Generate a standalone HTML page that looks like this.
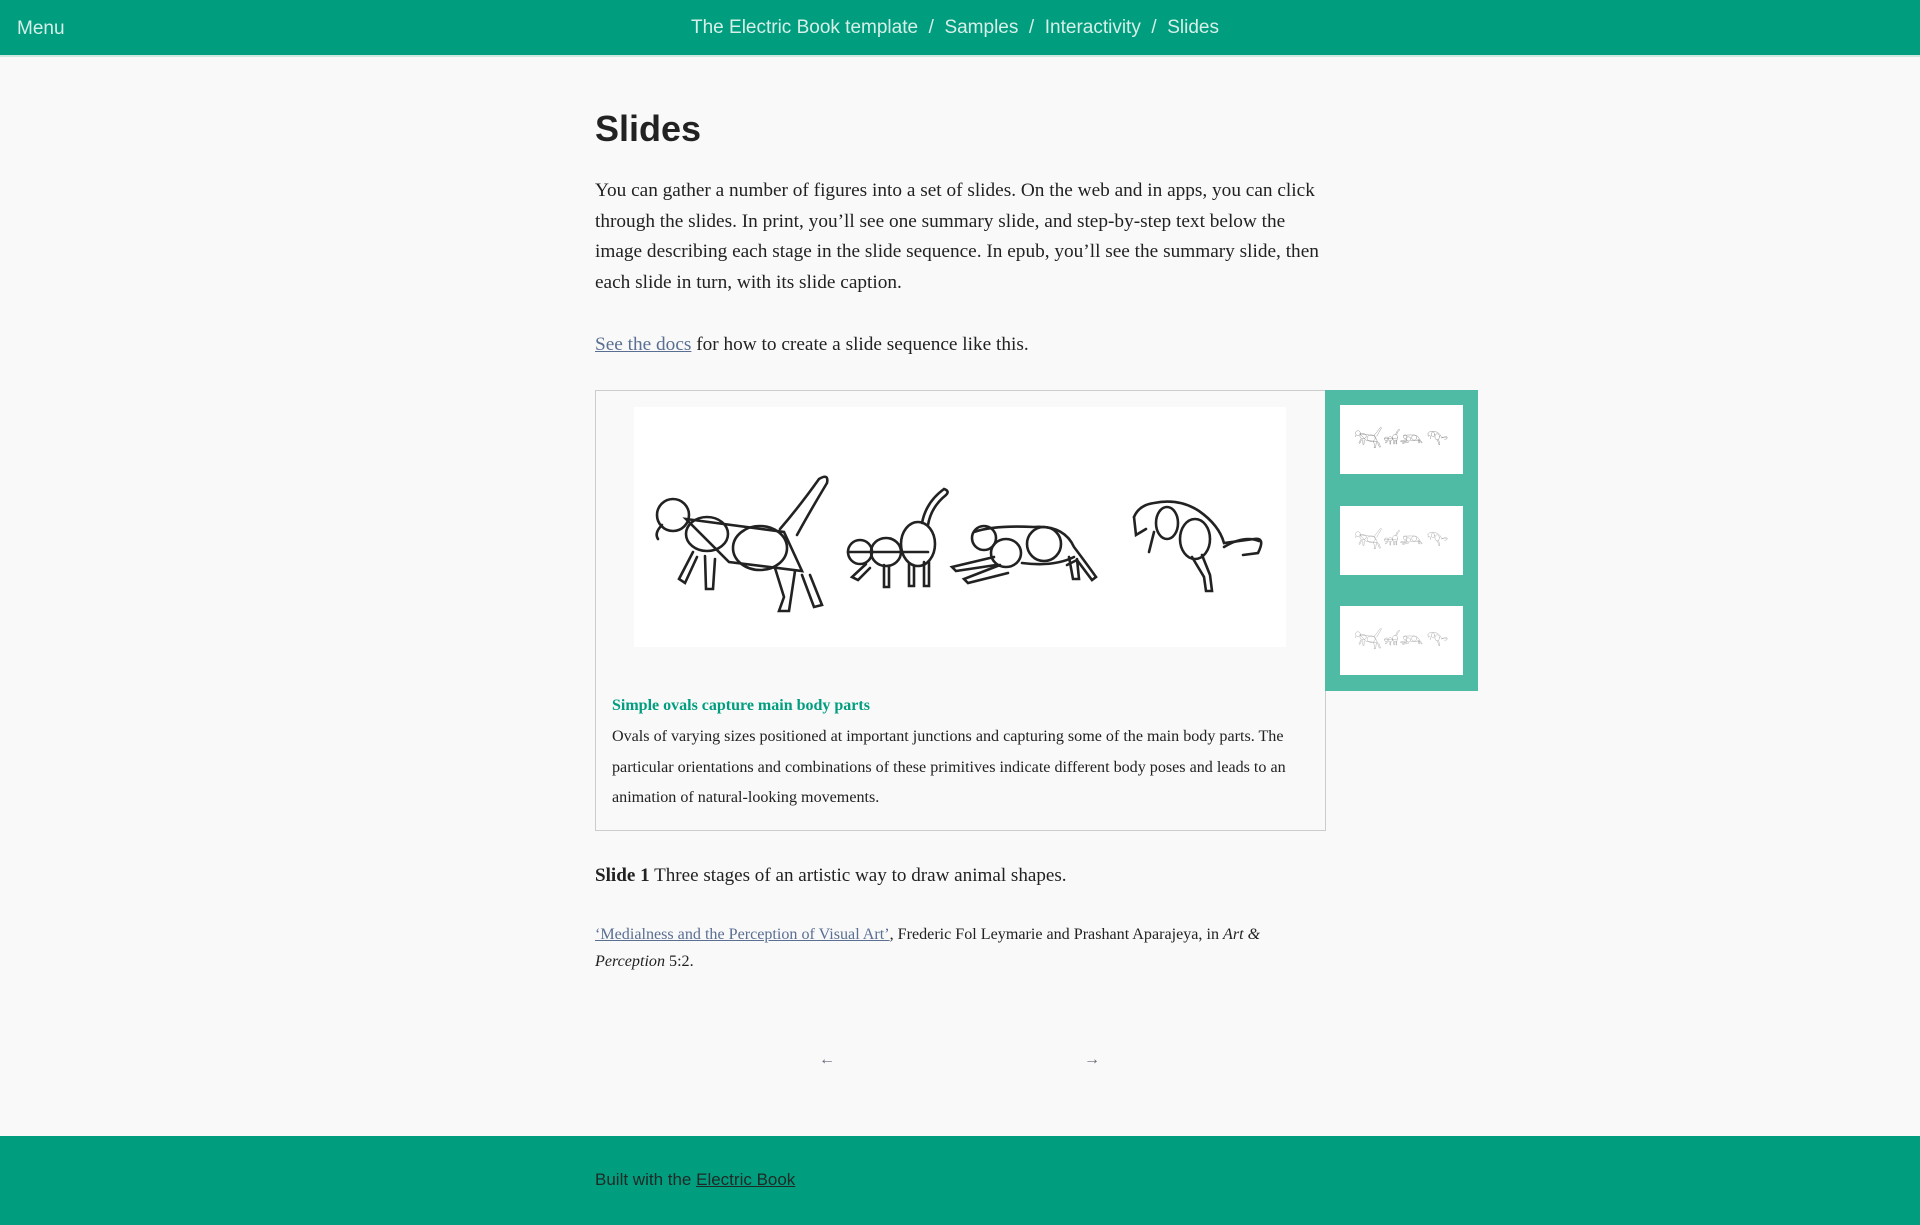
<!DOCTYPE html>
<html><head><meta charset="utf-8"><style>
*{margin:0;padding:0;box-sizing:border-box}
body{width:1920px;height:1225px;background:#f9f9f9;position:relative;overflow:hidden;font-family:"Liberation Serif",serif;color:#222}
.hdr{position:absolute;left:0;top:0;width:1920px;height:57px;background:#009e7f;border-bottom:2px solid #cfe9e2}
.sans{font-family:"Liberation Sans","DejaVu Sans",sans-serif}
.menu{position:absolute;left:17px;top:18px;font-size:19px;color:#d6efe8}
.crumb{position:absolute;left:0;width:1910px;text-align:center;top:17px;font-size:19px;color:#d6efe8}
.a{position:absolute}
h1{position:absolute;left:595px;top:108px;font-size:36px;font-weight:bold;font-family:"Liberation Sans",sans-serif;color:#222}
p.t{position:absolute;left:595px;width:725px;font-size:19.3px;line-height:30.5px;color:#222}
a{color:#5a6f92;text-decoration:underline}
.fig{position:absolute;left:595px;top:390px;width:731px;height:441px;border:1px solid #ccc;background:#f9f9f9}
.img{position:absolute;left:634px;top:407px;width:652px;height:240px;background:#fff}
.side{position:absolute;left:1325px;top:390px;width:153px;height:301px;background:#4fbba5}
.th{position:absolute;left:1340px;width:123px;height:69px;background:#fff}
.th svg{position:absolute;left:12px;top:12px;width:99px;height:36px;background:#fff}
.cap{position:absolute;left:612px;top:697px;font-size:16px;font-weight:bold;color:#009e7f}
.cb{position:absolute;left:612px;top:722px;width:700px;font-size:16.1px;line-height:30.7px;color:#222}
.foot{position:absolute;left:0;top:1136px;width:1920px;height:89px;background:#009e7f}
</style></head><body>
<svg width="0" height="0" style="position:absolute"><defs><symbol id="cats" viewBox="0 0 652 240"><g fill="none" stroke-width="2.6" stroke-linecap="round">
<circle cx="39" cy="108" r="16"/><path d="M28 118 q-8 8 -4 14"/>
<ellipse cx="73" cy="127" rx="21" ry="17"/><ellipse cx="126" cy="141" rx="27" ry="22"/>
<path d="M52 112 L150 125 L168 164 L95 155 Z"/>
<path d="M146 122 Q165 100 185 72 q10 -6 8 4 q-18 30 -30 52"/>
<path d="M59 145 L45 172 l6 4 l12 -26"/><path d="M71 149 L72 182 l7 0 l2 -30"/>
<path d="M141 161 L150 190 l-5 14 l10 0 l6 -40"/><path d="M168 168 L180 200 l8 -2 l-12 -30"/>
<circle cx="226" cy="145" r="12"/><ellipse cx="252" cy="145" rx="15" ry="14"/><ellipse cx="284" cy="137" rx="17" ry="22"/>
<path d="M214 145 h80"/><path d="M288 116 Q292 95 310 82 q6 2 2 6 q-15 12 -18 30"/>
<path d="M232 157 L218 170 l6 3 l12 -12"/><path d="M250 158 v22 h5 v-20"/><path d="M275 157 v22 h5 v-20"/><path d="M290 155 v24 h5 v-24"/>
<ellipse cx="350" cy="131" rx="12" ry="12"/><ellipse cx="372" cy="146" rx="15" ry="14"/><ellipse cx="410" cy="137" rx="17" ry="17"/>
<path d="M340 125 Q360 118 400 120 Q430 118 440 140 Q455 160 462 170 l-4 3 l-15 -20 l-10 5"/>
<path d="M388 156 Q420 160 440 150"/><path d="M360 150 L318 160 l4 4 l40 -6"/><path d="M366 158 L330 172 l4 4 l40 -10"/>
<path d="M435 150 l4 22 l6 0 l-2 -20"/>
<path d="M500 110 q5 -12 20 -14 q25 -5 45 8 q20 14 25 32 l30 -4 q12 -2 4 14 l-15 2"/>
<ellipse cx="533" cy="116" rx="11" ry="16"/><ellipse cx="561" cy="132" rx="15" ry="20"/>
<path d="M500 110 l2 18 l10 -6"/><path d="M520 125 l-5 20"/>
<path d="M558 150 l12 20 l2 14 l6 0 l-2 -16 l-8 -20"/><path d="M590 140 q20 -12 35 -6"/>
</g></symbol></defs></svg>

<div class="hdr"><div class="menu sans">Menu</div><div class="crumb sans">The Electric Book template &nbsp;/&nbsp; Samples &nbsp;/&nbsp; Interactivity &nbsp;/&nbsp; Slides</div></div>
<h1>Slides</h1>
<p class="t" style="top:176px">You can gather a number of figures into a set of slides. On the web and in apps, you can click through the slides. In print, you’ll see one summary slide, and step-by-step text below the image describing each stage in the slide sequence. In epub, you’ll see the summary slide, then each slide in turn, with its slide caption.</p>
<p class="t" style="top:330px"><a>See the docs</a> for how to create a slide sequence like this.</p>
<div class="fig"></div>
<div class="img"><svg width="652" height="240" stroke="#222"><use href="#cats"/></svg></div>
<div class="side"></div>
<div class="th" style="top:405px"><svg viewBox="0 0 99 36" stroke="#777"><use href="#cats" x="0" y="-6" width="99" height="48"/></svg></div>
<div class="th" style="top:506px"><svg viewBox="0 0 99 36" stroke="#999"><use href="#cats" x="0" y="-6" width="99" height="48"/></svg></div>
<div class="th" style="top:606px"><svg viewBox="0 0 99 36" stroke="#999"><use href="#cats" x="0" y="-6" width="99" height="48"/></svg></div>
<div class="cap">Simple ovals capture main body parts</div>
<div class="cb">Ovals of varying sizes positioned at important junctions and capturing some of the main body parts. The particular orientations and combinations of these primitives indicate different body poses and leads to an animation of natural-looking movements.</div>
<p class="t" style="top:861px;font-size:19.1px"><b>Slide 1</b> Three stages of an artistic way to draw animal shapes.</p>
<p class="t" style="top:921px;font-size:16.1px;line-height:27px;width:700px"><a>‘Medialness and the Perception of Visual Art’</a>, Frederic Fol Leymarie and Prashant Aparajeya, in <i>Art &amp; Perception</i> 5:2.</p>
<div class="a" style="left:819px;top:1051px;font-size:16px;color:#667">←</div>
<div class="a" style="left:1084px;top:1051px;font-size:16px;color:#667">→</div>
<div class="foot"><div class="a sans" style="left:595px;top:34px;font-size:17px;color:#1d2a26">Built with the <span style="text-decoration:underline">Electric Book</span></div></div>
</body></html>
